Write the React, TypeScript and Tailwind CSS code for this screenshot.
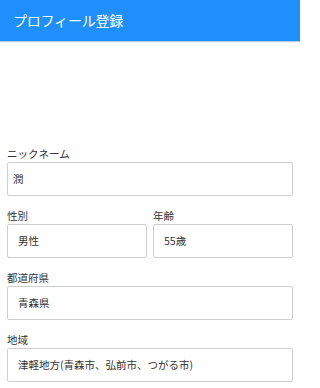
import React from 'react';

const font = { fontFamily: '"Noto Sans CJK JP", "Noto Sans", sans-serif' };

const Field: React.FC<{ label: string; value: string; select?: boolean }> = ({ label, value, select }) => (
  <div className="flex flex-col flex-1 min-w-0">
    <label className="text-[10.5px] leading-[17px] text-[#333]">{label}</label>
    <div
      className={`h-[34px] border border-[#cfcfcf] rounded-[2px] bg-white flex items-center text-[10.5px] text-[#333] ${
        select ? 'pl-[10px]' : 'pl-[5px]'
      }`}
    >
      {value}
    </div>
  </div>
);

const App: React.FC = () => {
  return (
    <div className="w-[300px] h-[388px] bg-white overflow-hidden" style={font}>
      <header className="h-[41px] bg-[#1f8ffc] flex items-center px-[13px] shadow-[0_1px_1px_rgba(30,110,200,0.35)]">
        <h1 className="text-[14px] text-white font-normal tracking-[-0.2px]">プロフィール登録</h1>
      </header>
      <main className="pt-[104px] px-[7px] flex flex-col gap-[11px]">
        <Field label="ニックネーム" value="潤" />
        <div className="flex gap-[6px]">
          <Field label="性別" value="男性" select />
          <Field label="年齢" value="55歳" select />
        </div>
        <Field label="都道府県" value="青森県" select />
        <Field label="地域" value="津軽地方(青森市、弘前市、つがる市)" select />
      </main>
    </div>
  );
};

export default App;
